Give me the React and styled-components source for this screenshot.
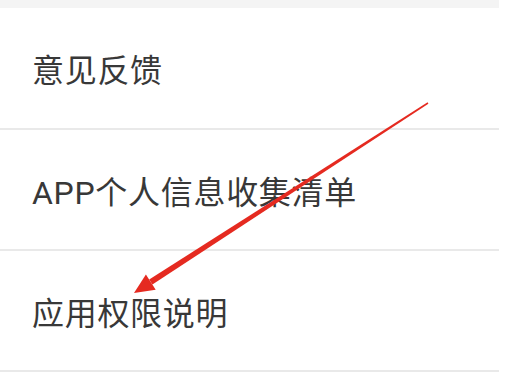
import React from 'react';
import styled, { createGlobalStyle } from 'styled-components';

const GlobalStyle = createGlobalStyle`
  html, body {
    margin: 0;
    padding: 0;
    background: #ffffff;
  }
  body {
    font-family: Roboto, "Noto Sans CJK SC", "Noto Sans", sans-serif;
  }
`;

const Page = styled.div`
  position: relative;
  width: 508px;
  height: 391px;
  overflow: hidden;
  background: #ffffff;
`;

const Panel = styled.div`
  width: 499px;
  display: flex;
  flex-direction: column;
`;

const TopBand = styled.div`
  height: 8px;
  background: #f4f4f4;
`;

const Row = styled.div`
  height: ${(p) => p.h}px;
  display: flex;
  align-items: center;
  padding-left: 32px;
  border-bottom: 2px solid #e9e9e9;
  font-size: 32px;
  color: #383838;
  letter-spacing: 0.7px;
`;

const Arrow = styled.svg`
  position: absolute;
  left: 0;
  top: 0;
  pointer-events: none;
`;

const items = [
  { label: '意见反馈', h: 120 },
  { label: 'APP个人信息收集清单', h: 119 },
  { label: '应用权限说明', h: 119 },
];

const App = () => {
  return (
    <Page>
      <GlobalStyle />
      <Panel>
        <TopBand />
        {items.map((it) => (
          <Row key={it.label} h={it.h}>{it.label}</Row>
        ))}
      </Panel>
      <Arrow width="508" height="391" viewBox="0 0 508 391">
        <polygon
          points="428.4,103.7 427.6,102.3 149.2,279.6 152.4,284.6"
          fill="#e52a20"
        />
        <polygon points="134,293 145.9,274.5 155.7,289.7" fill="#e52a20" />
      </Arrow>
    </Page>
  );
};

export default App;
